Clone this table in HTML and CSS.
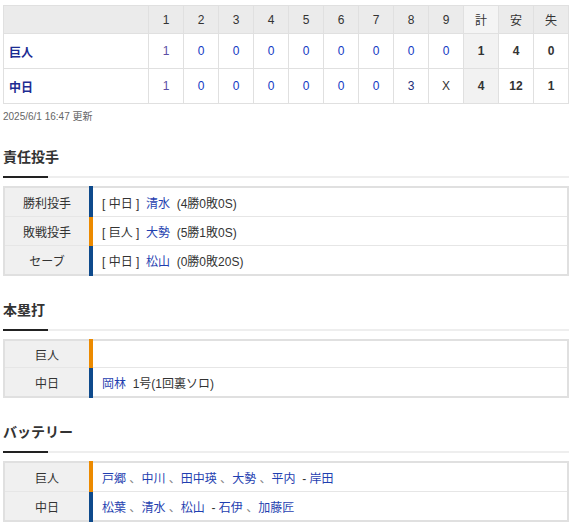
FILE: index.html
```html
<!DOCTYPE html>
<html lang="ja">
<head>
<meta charset="utf-8">
<title>試合結果</title>
<link rel="stylesheet" href="styles.css">
</head>
<body>
<div class="page">
  <table class="score">
    <colgroup>
      <col class="c-team">
      <col span="12" class="c-num">
    </colgroup>
    <thead>
      <tr>
        <th></th>
        <th>1</th><th>2</th><th>3</th><th>4</th><th>5</th><th>6</th><th>7</th><th>8</th><th>9</th>
        <th class="tot">計</th><th>安</th><th>失</th>
      </tr>
    </thead>
    <tbody>
      <tr>
        <td class="team">巨人</td>
        <td class="v">1</td><td class="r">0</td><td class="r">0</td><td class="r">0</td><td class="r">0</td><td class="r">0</td><td class="r">0</td><td class="r">0</td><td class="r">0</td>
        <td class="tot b">1</td><td class="b">4</td><td class="b">0</td>
      </tr>
      <tr>
        <td class="team">中日</td>
        <td class="v">1</td><td class="r">0</td><td class="r">0</td><td class="r">0</td><td class="r">0</td><td class="r">0</td><td class="r">0</td><td class="d">3</td><td class="x">X</td>
        <td class="tot b">4</td><td class="b">12</td><td class="b">1</td>
      </tr>
    </tbody>
  </table>
  <p class="updated">2025/6/1 16:47 更新</p>

  <h2 class="sec first">責任投手</h2>
  <table class="info">
    <tr><th class="lbl blue">勝利投手</th><td>[ 中日 ]&nbsp; <span class="nm">清水</span>&nbsp; (4勝0敗0S)</td></tr>
    <tr><th class="lbl orange">敗戦投手</th><td>[ 巨人 ]&nbsp; <span class="nm">大勢</span>&nbsp; (5勝1敗0S)</td></tr>
    <tr><th class="lbl blue">セーブ</th><td>[ 中日 ]&nbsp; <span class="nm">松山</span>&nbsp; (0勝0敗20S)</td></tr>
  </table>

  <h2 class="sec">本塁打</h2>
  <table class="info hr">
    <tr class="r1"><th class="lbl orange">巨人</th><td></td></tr>
    <tr class="r2"><th class="lbl blue">中日</th><td><span class="nm">岡林</span>&nbsp; 1号(1回裏ソロ)</td></tr>
  </table>

  <h2 class="sec">バッテリー</h2>
  <table class="info">
    <tr><th class="lbl orange">巨人</th><td><span class="nm">戸郷</span> <span class="sep">、</span><span class="nm">中川</span> <span class="sep">、</span><span class="nm">田中瑛</span> <span class="sep">、</span><span class="nm">大勢</span> <span class="sep">、</span><span class="nm">平内</span>&nbsp; - <span class="nm">岸田</span></td></tr>
    <tr><th class="lbl blue">中日</th><td><span class="nm">松葉</span> <span class="sep">、</span><span class="nm">清水</span> <span class="sep">、</span><span class="nm">松山</span>&nbsp; - <span class="nm">石伊</span> <span class="sep">、</span><span class="nm">加藤匠</span></td></tr>
  </table>
</div>
</body>
</html>
```

FILE: styles.css
```css
html, body {
  margin: 0;
  padding: 0;
  background: #fff;
}
body {
  font-family: "Liberation Sans", "Noto Sans CJK JP", sans-serif;
  font-size: 12px;
  color: #333;
}
.page {
  padding: 5px 2px 0 3px;
}
table {
  border-collapse: collapse;
  width: 566px;
}
.score {
  table-layout: fixed;
}
.c-team { width: 145px; }
.c-num { width: 35px; }
.score th,
.score td {
  border: 1px solid #e0e0e0;
  text-align: center;
  padding: 0;
}
.score thead th {
  background: #ebebeb;
  height: 27px;
  font-weight: normal;
  color: #333;
}
.score thead th.tot {
  background: #f4f4f4;
}
.score tbody td {
  height: 34px;
}
.score td.team {
  text-align: left;
  padding-left: 5px;
  font-weight: bold;
  color: #1c2c92;
}
.score td.r { color: #1238c4; }
.score td.v { color: #5b4ea4; }
.score td.d { color: #1c2c78; }
.score td.x { color: #333; }
.score td.b { font-weight: bold; color: #333; }
.score td.tot { background: #f2f2f2; }

.updated {
  margin: 5px 0 0;
  font-size: 10px;
  line-height: 15px;
  color: #666;
}

.sec {
  position: relative;
  margin: 24px 0 0;
  padding: 0 0 9px;
  font-size: 14px;
  line-height: 20px;
  font-weight: bold;
  color: #333;
  border-bottom: 2px solid #eeeeee;
}
.sec.first {
  margin-top: 23px;
}
.sec::after {
  content: "";
  position: absolute;
  left: 0;
  bottom: -2px;
  width: 45px;
  height: 2px;
  background: #222;
}

.info {
  margin-top: 8px;
  border: 2px solid #e0e0e0;
}
.info th,
.info td {
  height: 28px;
  padding: 0;
  border-top: 1px solid #e6e6e6;
}
.info .lbl {
  width: 84px;
  background: #f0f0f0;
  font-weight: normal;
  color: #333;
  text-align: center;
  border-right: 4px solid #0e4a8c;
}
.info .lbl.orange { border-right-color: #ec8a00; }
.info .lbl.blue { border-right-color: #0e4a8c; }
.info td {
  padding-left: 9px;
  text-align: left;
  color: #333;
}
.info .nm { color: #1f3fb0; }
.info .sep { color: #888; }
.info.hr .r1 th,
.info.hr .r1 td { height: 26px; }
```
